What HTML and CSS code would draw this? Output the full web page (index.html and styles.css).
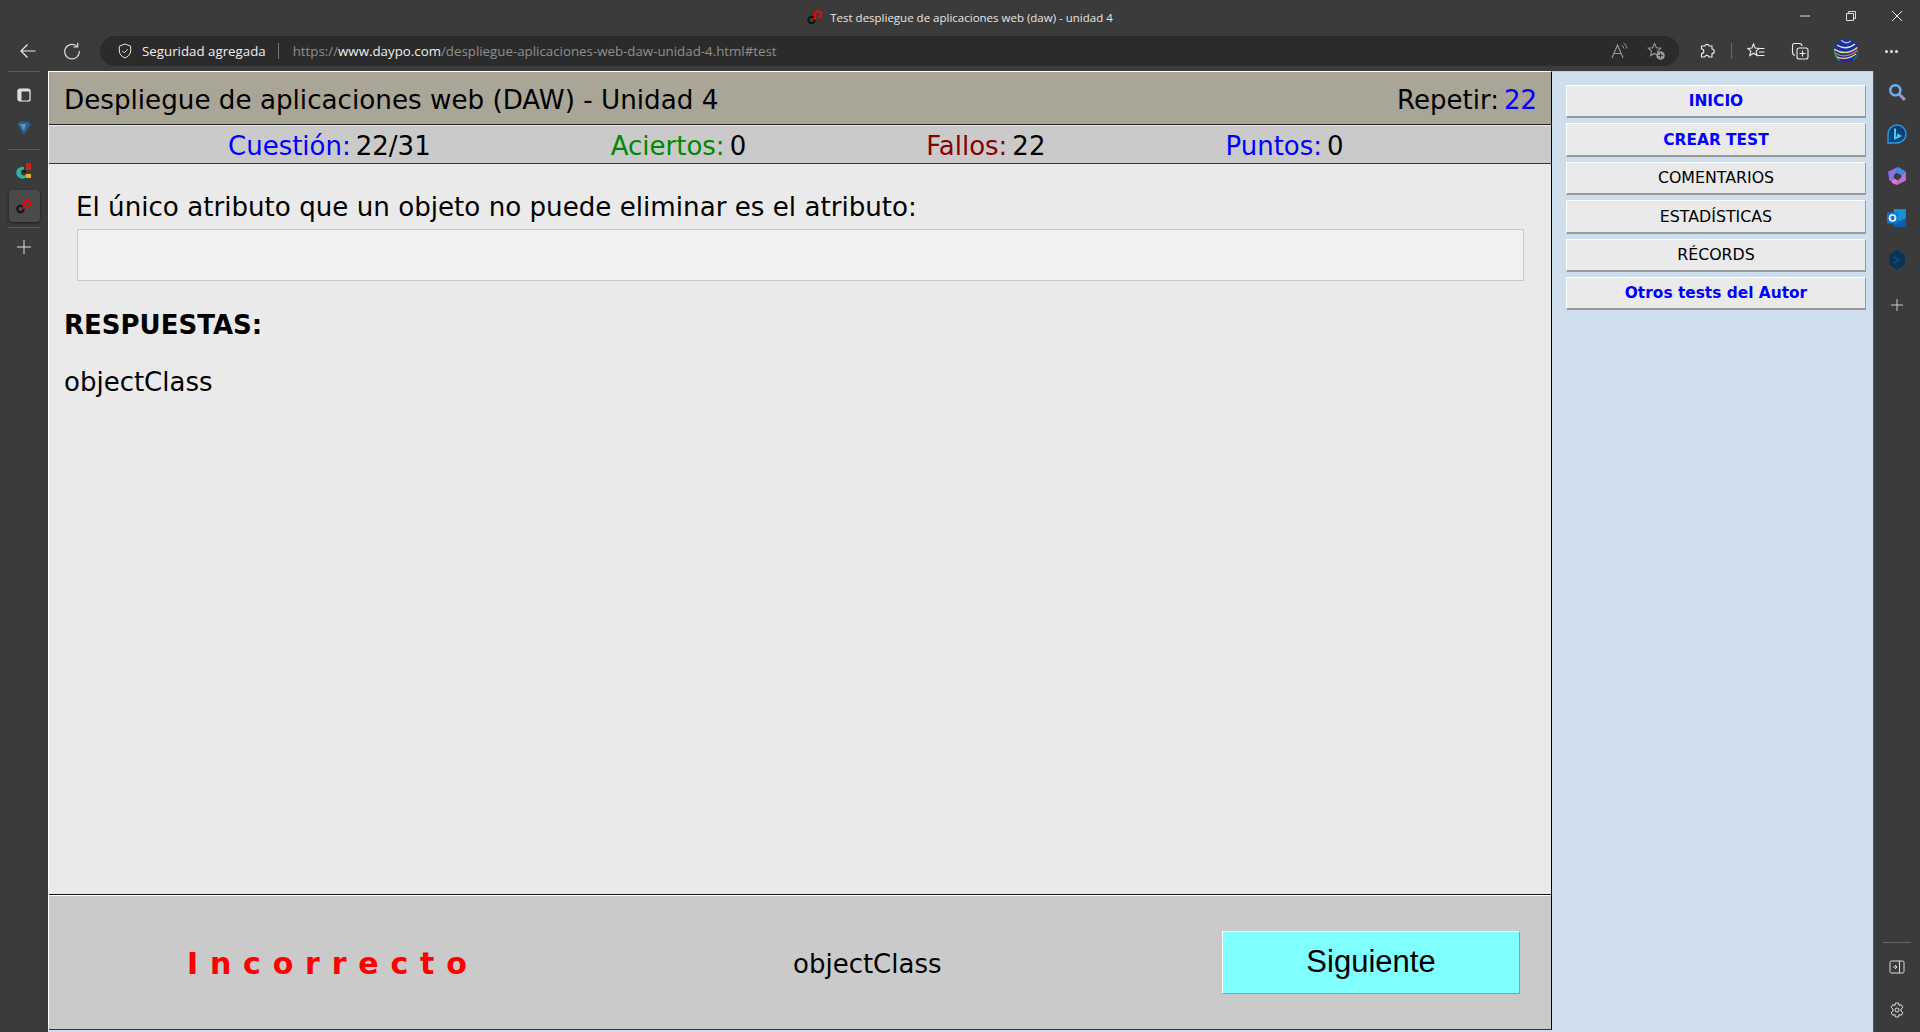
FILE: index.html
```html
<!DOCTYPE html>
<html lang="es">
<head>
<meta charset="utf-8">
<title>Test despliegue de aplicaciones web (daw) - unidad 4</title>
<link rel="stylesheet" href="styles.css">
</head>
<body>
<header class="titlebar">
  <div class="title">
    <svg class="logo-small" viewBox="0 0 16 16"><circle cx="4.500" cy="11" r="3.200" fill="none" stroke="#111" stroke-width="2"/><path d="M7.700 11V5.500A3.300 3.300 0 1 1 10.800 8.800" fill="none" stroke="#f00" stroke-width="2"/></svg>
    <span>Test despliegue de aplicaciones web (daw) - unidad 4</span>
  </div>
  <div class="winctl">
    <svg viewBox="0 0 12 12"><path d="M1 6h10" stroke="#ddd" fill="none"/></svg>
    <svg viewBox="0 0 12 12"><path d="M1.500 3.500h7v7h-7zM3.500 3.500v-2h7v7h-2" stroke="#ddd" fill="none"/></svg>
    <svg viewBox="0 0 12 12"><path d="M1 1l10 10M11 1L1 11" stroke="#eee" fill="none"/></svg>
  </div>
</header>
<nav class="toolbar">
  <svg class="tb-icon back" viewBox="0 0 18 18"><path d="M16.500 9H2M8.500 2.500L2 9l6.500 6.500" stroke="#eee" stroke-width="1.200" fill="none"/></svg>
  <svg class="tb-icon reload" viewBox="0 0 18 18"><path d="M14.500 4.800A7.300 7.300 0 1 0 16.300 9" stroke="#ddd" stroke-width="1.200" fill="none"/><path d="M10.500 5h4.200V.8" stroke="#ddd" stroke-width="1.200" fill="none"/></svg>
  <div class="address">
    <svg class="shield" viewBox="0 0 16 18"><path d="M8 1l6.500 2.500V9c0 3.800-3 6.300-6.500 8C4.500 15.300 1.500 12.800 1.500 9V3.500z" fill="none" stroke="#eee" stroke-width="1.100"/><path d="M5 9l2.200 2.200L11 7" fill="none" stroke="#eee" stroke-width="1.100"/></svg>
    <span class="secure">Seguridad agregada</span>
    <span class="sep"></span>
    <span class="url">https://<b>www.daypo.com</b>/despliegue-aplicaciones-web-daw-unidad-4.html#test</span>
    <span class="address-end">
      <svg class="ai" viewBox="0 0 18 18"><path d="M1 16L6.500 3l5.500 13M3 11.500h7" stroke="#999" fill="none" stroke-width="1.100"/><path d="M10.500 3.500a4 4 0 0 1 2.500 3M12.500 1a7 7 0 0 1 3.500 5.500" stroke="#999" fill="none"/></svg>
      <svg class="ai" viewBox="0 0 18 18"><path d="M7.500 1.500l1.900 4.200 4.400.5-3.300 3 .9 4.400-3.900-2.200-3.900 2.200.9-4.400-3.300-3 4.400-.5z" fill="none" stroke="#999" stroke-width="1.100"/><circle cx="13.500" cy="13.500" r="4.300" fill="#999"/><path d="M11.300 13.500h4.400M13.500 11.300v4.400" stroke="#2b2b2b"/></svg>
    </span>
  </div>
  <div class="tb-right">
    <svg class="tr ext" viewBox="0 0 18 18"><path d="M6.800 4a2.300 2.300 0 0 1 4.400 0H14v3a2.300 2.300 0 0 1 0 4.600V15h-3a2.300 2.300 0 0 0-4.400 0H3.500v-3.400a2.300 2.300 0 0 0 0-4.600V4z" fill="none" stroke="#eee" stroke-width="1.100" stroke-linejoin="round"/></svg>
    <span class="tb-sep"></span>
    <svg class="tr fav" viewBox="0 0 18 18"><path d="M6.500 2l1.600 4 4.200.4-3.200 2.800 1 4.300-3.600-2.300-3.700 2.300 1-4.300L.7 6.400 4.900 6z" fill="none" stroke="#eee" stroke-width="1.100"/><path d="M11.500 6.500h6M12 10h5.500M10.500 13.500h7" stroke="#eee" stroke-width="1.100"/></svg>
    <svg class="tr coll" viewBox="0 0 18 18"><path d="M4 13.500C2 13 1.500 11 1.500 10V3.500c0-1 1-2 2-2h5c1.500 0 2.500 1 2.500 2.500" fill="none" stroke="#eee" stroke-width="1.100"/><rect x="6" y="6" width="11" height="11" rx="2" fill="none" stroke="#eee" stroke-width="1.100"/><path d="M11.500 8.500v6M8.500 11.500h6" stroke="#eee" stroke-width="1.100"/></svg>
    <svg class="avatar" viewBox="0 0 24 24"><defs><clipPath id="av"><circle cx="12" cy="12" r="12"/></clipPath></defs><g clip-path="url(#av)"><rect width="24" height="24" fill="#1a2f9c"/><path d="M0 10q4 10 8 14H0z" fill="#1fa84c"/><path d="M16 24q6-4 8-12v12z" fill="#1fa84c"/><path d="M5 24q7-3 15 0z" fill="#6a2140"/><path d="M0 10q12 8 24-2" stroke="#e7dd74" stroke-width="1.500" fill="none"/><path d="M1 14q11 7 23-3" stroke="#ea6f5a" stroke-width="1.300" fill="none"/><path d="M3 18q9 4 19-3" stroke="#e7dd74" stroke-width="1.200" fill="none"/><path d="M3 6q9 6 18-1" stroke="#d7e0f7" stroke-width="1.400" fill="none"/><path d="M7 1q5 5 10 1" stroke="#9fb6ee" stroke-width="1.400" fill="none"/></g></svg>
    <span class="dots"><i></i><i></i><i></i></span>
  </div>
</nav>
<div class="workspace">
  <aside class="side-left">
    <span class="sl-rule"></span>
    <svg class="sl-icon tabs" viewBox="0 0 14 14"><rect x="1" y="1" width="12" height="12" rx="2" fill="none" stroke="#eee" stroke-width="1.200"/><rect x="1" y="1" width="12" height="2.500" fill="#ddd"/><rect x="1" y="1" width="3.500" height="12" fill="#ddd"/></svg>
    <svg class="sl-icon gem" viewBox="0 0 14 14"><path d="M0 3l3-2.500h8L14 3 7 14z" fill="#2a5f8e"/><path d="M3 3h6L7 10z" fill="#5f94c0"/></svg>
    <span class="sl-rule second"></span>
    <svg class="tab-a" viewBox="0 0 16 16"><rect x="10" y="0" width="5" height="7" fill="#c8241f"/><path d="M8 4a6 6 0 1 0 2 10.500v-3a3 3 0 1 1-2-5z" fill="#2bb3a8"/><rect x="10" y="11" width="5" height="4" fill="#e8b21f"/><rect x="6" y="7" width="4" height="3" fill="#222"/></svg>
    <span class="tab-active"><svg class="logo" viewBox="0 0 16 16"><circle cx="4.500" cy="11" r="3.200" fill="none" stroke="#111" stroke-width="2"/><path d="M7.700 11V5.500A3.300 3.300 0 1 1 10.800 8.800" fill="none" stroke="#f00" stroke-width="2"/></svg></span>
    <span class="sl-rule third"></span>
    <svg class="sl-icon plus" viewBox="0 0 14 14"><path d="M7 0v14M0 7h14" stroke="#ddd"/></svg>
  </aside>
  <main class="main">
    <div class="head">
      <h1>Despliegue de aplicaciones web (DAW) - Unidad 4</h1>
      <div class="repeat">Repetir:<span class="blue">22</span></div>
    </div>
    <div class="stats">
      <div class="stat"><span class="blue">Cuestión:</span>22/31</div>
      <div class="stat"><span class="green">Aciertos:</span>0</div>
      <div class="stat"><span class="red">Fallos:</span>22</div>
      <div class="stat"><span class="blue">Puntos:</span>0</div>
    </div>
    <section class="body">
      <p class="question">El único atributo que un objeto no puede eliminar es el atributo:</p>
      <div class="answer-box"></div>
      <h2>RESPUESTAS:</h2>
      <p class="answer">objectClass</p>
    </section>
    <footer class="result">
      <div class="verdict">Incorrecto</div>
      <div class="given">objectClass</div>
      <button class="next">Siguiente</button>
    </footer>
  </main>
  <aside class="menu">
    <a class="mbtn strong">INICIO</a>
    <a class="mbtn strong">CREAR TEST</a>
    <a class="mbtn">COMENTARIOS</a>
    <a class="mbtn">ESTADÍSTICAS</a>
    <a class="mbtn">RÉCORDS</a>
    <a class="mbtn strong">Otros tests del Autor</a>
  </aside>
  <aside class="side-right">
    <svg class="sr" viewBox="0 0 16 16"><circle cx="6.500" cy="6.500" r="4.500" fill="none" stroke="#6ab0f0" stroke-width="2.200"/><path d="M10 10l5 5" stroke="#b48ae0" stroke-width="2.600"/></svg>
    <svg class="sr wide" viewBox="0 0 20 20"><path d="M10 1a9 9 0 1 1 0 18H1v-9a9 9 0 0 1 9-9z" fill="#0c3f7a" stroke="#1ea0ea" stroke-width="1.400"/><path d="M8 4.500v10l5-2.500-3-1.500" fill="none" stroke="#3fd0f0" stroke-width="2"/></svg>
    <svg class="sr wide" viewBox="0 0 18 18"><path d="M10 1l7 4-4 3-5-2z" fill="#3a8fe0"/><path d="M17 5v8l-8 4 1-4 3-3V8z" fill="#b66fe0"/><path d="M1 5l9-4-2 5-2 3v6l-4-2z" fill="#8a6fe8"/><path d="M6 11l4 2-1 4-5-2z" fill="#e07ac8"/></svg>
    <svg class="sr wide" viewBox="0 0 18 18"><rect x="6" y="1" width="11" height="16" fill="#1690d8"/><path d="M6 9l5.500 3L17 9v8H6z" fill="#0a5fa8"/><rect x="0" y="4" width="10" height="10" rx="1" fill="#0f78d4"/><circle cx="5" cy="9" r="2.700" fill="none" stroke="#fff" stroke-width="1.500"/></svg>
    <svg class="sr" viewBox="0 0 16 18"><path d="M8 0l7 4v9l-7 5-7-5V4z" fill="#0a3358"/><path d="M5 6l5 3-5 3" fill="none" stroke="#134a72" stroke-width="1.500"/></svg>
    <svg class="sr-plus" viewBox="0 0 14 14"><path d="M7 1v12M1 7h12" stroke="#ccc"/></svg>
    <span class="sr-spacer"></span>
    <span class="sr-rule"></span>
    <svg class="sr-bottom" viewBox="0 0 16 16"><rect x="1" y="2" width="14" height="12" rx="1.500" fill="none" stroke="#ddd"/><path d="M10.500 2v12" stroke="#ddd"/><path d="M4 8h4M6 6l2 2-2 2" stroke="#ddd" fill="none"/></svg>
    <svg class="sr-bottom gear" viewBox="0 0 16 18"><path d="M6.500 1h3l.5 2.500 2.300-.8 1.500 2.600-1.800 1.700v2l1.800 1.700-1.500 2.600-2.300-.8-.5 2.500h-3L6 12.500l-2.300.8-1.500-2.600L4 9V7L2.200 5.300l1.500-2.600 2.300.8z" fill="none" stroke="#ddd"/><circle cx="8" cy="8" r="2" fill="none" stroke="#ddd"/></svg>
  </aside>
</div>
</body>
</html>
```
FILE: styles.css
```css
* { box-sizing: border-box; }
html, body { margin: 0; height: 100%; }
body {
  display: flex;
  flex-direction: column;
  height: 1032px;
  overflow: hidden;
  background: #3b3b3b;
  font-family: "DejaVu Sans", sans-serif;
  color: #000;
}
svg { display: block; flex: none; }

/* Browser title bar */
.titlebar { height: 36px; flex: none; position: relative; display: flex; align-items: flex-start; justify-content: center; padding-top: 9px; }
.title { display: flex; align-items: center; gap: 7px; font: 11.500px "Open Sans", sans-serif; color: #e6e6e6; height: 16px; }
.logo-small { width: 16px; height: 16px; }
.winctl { position: absolute; right: 17px; top: 10px; display: flex; gap: 34px; }
.winctl svg { width: 12px; height: 12px; }

/* Browser toolbar */
.toolbar { height: 35px; flex: none; display: flex; align-items: flex-start; }
.tb-icon { width: 18px; height: 18px; margin-top: 6px; }
.back { margin-left: 19px; }
.reload { margin-left: 26px; }
.address { margin-left: 19px; width: 1579px; height: 30px; border-radius: 15px; background: #2b2b2b; display: flex; align-items: center; padding-left: 18px; font: 13.300px "Open Sans", sans-serif; }
.shield { width: 14px; height: 16px; }
.secure { margin-left: 10px; color: #eee; }
.sep { width: 1px; height: 16px; background: #777; margin: 0 14px 0 12px; }
.url { color: #8f8f8f; }
.url b { color: #eee; font-weight: 400; }
.address-end { margin-left: auto; display: flex; gap: 18px; padding-right: 14px; }
.ai { width: 18px; height: 18px; }
.tb-right { flex: 1; display: flex; align-items: center; height: 30px; padding-left: 19px; }
.tr { width: 18px; height: 18px; }
.tb-sep { width: 1px; height: 16px; background: #666; margin: 0 15px; }
.coll { margin-left: 26px; }
.avatar { width: 24px; height: 24px; margin-left: 25px; }
.dots { display: flex; gap: 2px; margin-left: 27px; }
.dots i { width: 3px; height: 3px; background: #eee; border-radius: 50%; }

/* Workspace */
.workspace { flex: 1; display: flex; min-height: 0; background: #cfdeed; }

.side-left { width: 48px; flex: none; display: flex; flex-direction: column; align-items: center; background: #3b3b3b; }
.sl-rule { width: 32px; height: 1px; background: #5a5a5a; flex: none; }
.sl-icon { width: 14px; height: 14px; }
.tabs { margin-top: 16px; }
.gem { margin-top: 19px; }
.second { margin-top: 14px; }
.tab-a { width: 16px; height: 16px; margin-top: 13px; }
.tab-active { width: 31px; height: 32px; margin-top: 11px; border-radius: 4px; background: #4a4a4a; box-shadow: 0 1px 3px #0008; display: flex; align-items: center; justify-content: center; flex: none; }
.logo { width: 16px; height: 16px; }
.third { margin-top: 5px; }
.plus { margin-top: 12px; }

.main { width: 1504px; flex: none; display: flex; flex-direction: column; background: #eaeaea; border-left: 1px solid #fff; border-right: 1px solid #000; border-top: 1px solid #fff; margin-bottom: 2px; }
.head { height: 53px; flex: none; background: #a9a597; border-bottom: 1px solid #222; display: flex; align-items: center; justify-content: space-between; padding: 4px 14px 0 15px; font-size: 26px; }
.head h1 { margin: 0; font-size: 26.200px; font-weight: 400; }
.blue { color: #00f; }
.green { color: #080; }
.red { color: #800; }
.repeat .blue { margin-left: 5px; }
.stats { height: 38px; flex: none; margin-top: 1px; background: #cacaca; border-bottom: 1px solid #333; display: flex; gap: 180px; padding: 3px 0 0 179px; font-size: 26px; align-items: center; }
.stat { display: flex; }
.stat span { margin-right: 5px; }
.body { flex: 1; min-height: 0; padding: 25px 27px 0 15px; }
.question { margin: 0 0 0 12px; font-size: 26.150px; line-height: 36px; }
.answer-box { margin: 4px 0 0 13px; height: 52px; background: #f1f1f1; border: 1px solid #c8c8c8; }
h2 { margin: 29px 0 0; font-size: 26px; line-height: 30px; font-weight: 700; }
.answer { margin: 27px 0 0; font-size: 26px; line-height: 30px; }
.result { height: 136px; flex: none; background: #cacaca; border-top: 1px solid #111; box-shadow: inset 0 1px 0 #fff; border-bottom: 1px solid #333; display: flex; align-items: center; padding-left: 138px; }
.verdict { width: 606px; color: #f00; font-weight: 700; font-size: 30px; letter-spacing: 11.800px; padding-top: 3px; }
.given { width: 429px; font-size: 26px; padding-top: 3px; }
.next { width: 298px; height: 63px; background: #7fffff; border: 1px solid; border-color: #fff #999 #999 #fff; font: 31px "Liberation Sans", sans-serif; color: #000; padding: 0; }

.menu { flex: 1; background: #cfdeed; padding: 13px 7px 0 14px; display: flex; flex-direction: column; gap: 5px; border-top: 1px solid #ccc; }
.mbtn { height: 33.400px; background: #eaeaea; border: 1px solid; border-width: 1px 1px 2px 1px; border-color: #fff #999 #999 #fff; display: flex; align-items: center; justify-content: center; font-size: 15.800px; }
.mbtn.strong { color: #00f; font-weight: 700; font-size: 15.400px; }

.side-right { width: 47px; flex: none; background: #3b3b3b; border-left: 1px solid #555; display: flex; flex-direction: column; align-items: center; padding: 11px 0 12px; }
.sr { width: 18px; height: 20px; margin-bottom: 22px; }
.sr.wide { width: 20px; }
.sr-plus { width: 14px; height: 14px; margin-top: 6px; }
.sr-spacer { flex: 1; }
.sr-rule { width: 28px; height: 1px; background: #666; margin-bottom: 16px; }
.sr-bottom { width: 16px; height: 16px; margin-bottom: 27px; }
.sr-bottom.gear { height: 18px; margin-bottom: 0; }
```
